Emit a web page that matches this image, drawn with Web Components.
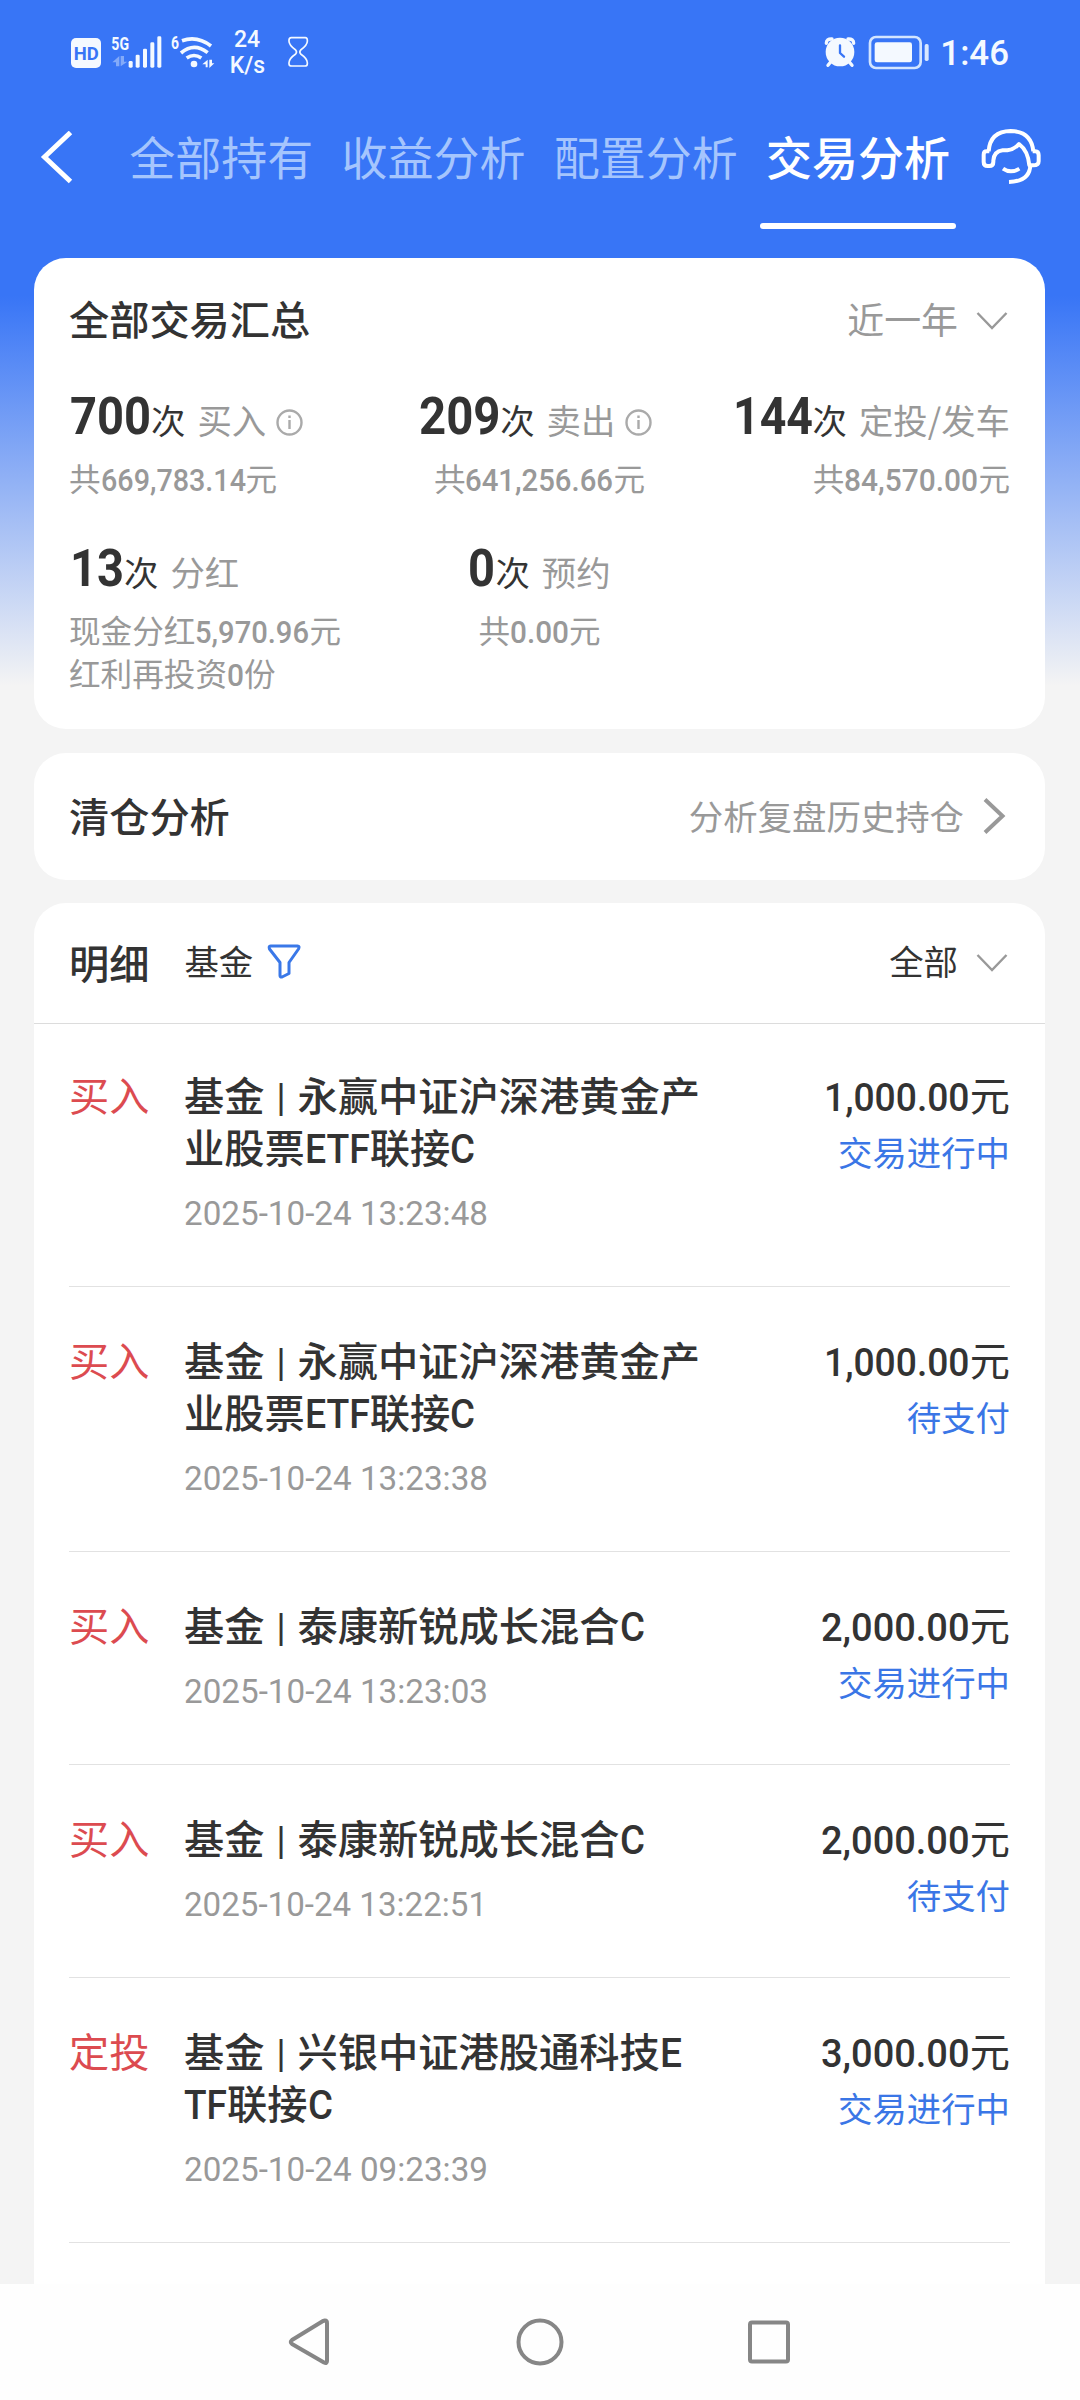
<!DOCTYPE html>
<html lang="zh-CN">
<head>
<meta charset="utf-8">
<title>交易分析</title>
<style>
html,body{margin:0;padding:0}
body{width:1080px;height:2400px;overflow:hidden;font-family:"Noto Sans CJK SC",sans-serif;color:#333}
</style>
</head>
<body>
<app-page>
  <status-bar></status-bar>
  <tab-bar>
    <tab-item>全部持有</tab-item>
    <tab-item>收益分析</tab-item>
    <tab-item>配置分析</tab-item>
    <tab-item active>交易分析</tab-item>
  </tab-bar>
  <page-card style="height:471px">
    <card-head style="--h:120px"><span>全部交易汇总</span><drop-down slot="end" style="font-size:36.9px;color:#999">近一年</drop-down></card-head>
    <stat-grid>
      <stat-item label="买入" info><fit-text slot="n" w="81" style="margin-left:1px">700</fit-text>共<fit-text w="145">669,783.14</fit-text>元</stat-item>
      <stat-item label="卖出" info><fit-text slot="n" w="81.5">209</fit-text>共<fit-text w="148">641,256.66</fit-text>元</stat-item>
      <stat-item label="定投/发车"><fit-text slot="n" w="80">144</fit-text>共<fit-text w="134">84,570.00</fit-text>元</stat-item>
      <stat-item label="分红"><fit-text slot="n" w="54" style="margin-left:1px">13</fit-text>现金分红<fit-text w="114">5,970.96</fit-text>元<br>红利再投资<fit-text w="17">0</fit-text>份</stat-item>
      <stat-item label="预约"><fit-text slot="n" w="27">0</fit-text>共<fit-text w="59">0.00</fit-text>元</stat-item>
    </stat-grid>
  </page-card>
  <page-card style="height:127px;margin-bottom:23px">
    <card-head style="--h:123px"><span>清仓分析</span><more-link slot="end">分析复盘历史持仓</more-link></card-head>
  </page-card>
  <page-card open-end style="height:1381px">
    <card-head line style="--h:117px;padding-bottom:3px"><span>明细</span><filter-tag>基金</filter-tag><drop-down slot="end" style="font-size:34.4px;margin-top:-3px">全部</drop-down></card-head>
    <trade-item first type="买入" time="2025-10-24 13:23:48" tw="304" status="交易进行中"><fit-text slot="amt" w="145.5">1,000.00</fit-text>基金<bar-sep></bar-sep>永赢中证沪深港黄金产<br>业股票<fit-text w="65">ETF</fit-text>联接<fit-text w="25">C</fit-text></trade-item>
    <trade-item type="买入" time="2025-10-24 13:23:38" tw="304" status="待支付"><fit-text slot="amt" w="145.5">1,000.00</fit-text>基金<bar-sep></bar-sep>永赢中证沪深港黄金产<br>业股票<fit-text w="65">ETF</fit-text>联接<fit-text w="25">C</fit-text></trade-item>
    <trade-item type="买入" time="2025-10-24 13:23:03" tw="304" status="交易进行中"><fit-text slot="amt" w="148.5">2,000.00</fit-text>基金<bar-sep></bar-sep>泰康新锐成长混合<fit-text w="25">C</fit-text></trade-item>
    <trade-item type="买入" time="2025-10-24 13:22:51" tw="303" status="待支付"><fit-text slot="amt" w="148.5">2,000.00</fit-text>基金<bar-sep></bar-sep>泰康新锐成长混合<fit-text w="25">C</fit-text></trade-item>
    <trade-item type="定投" time="2025-10-24 09:23:39" tw="304" status="交易进行中"><fit-text slot="amt" w="148.5">3,000.00</fit-text>基金<bar-sep></bar-sep>兴银中证港股通科技<fit-text w="22">E</fit-text><br><fit-text w="43">TF</fit-text>联接<fit-text w="25">C</fit-text></trade-item>
  </page-card>
  <nav-bar slot="nav"></nav-bar>
</app-page>

<script>
function define(name, html, init) {
  const t = document.createElement('template');
  t.innerHTML = html;
  customElements.define(name, class extends HTMLElement {
    constructor() {
      super();
      this.attachShadow({ mode: 'open' }).appendChild(t.content.cloneNode(true));
    }
    connectedCallback() { if (init) init(this, this.shadowRoot); }
  });
}

define('app-page', `<style>
:host{display:flex;flex-direction:column;width:1080px;height:2400px;background:linear-gradient(#3875f6 0,#3875f6 296px,#f4f4f4 686px,#f4f4f4 100%)}
main{height:2284px;overflow:hidden;display:flex;flex-direction:column}
</style><main><slot></slot></main><slot name="nav"></slot>`);

define('status-bar', `<style>
:host{display:flex;justify-content:space-between;height:86px;padding:20px 50px 0 60px;flex:none}
text{font-family:Roboto,sans-serif;fill:#f4f9ff}
</style>
<svg width="260" height="64" viewBox="0 0 780 192" fill="#f4f9ff">
<rect x="33" y="54" width="90" height="90" rx="15"/>
<text x="41" y="119" font-size="57" font-weight="700" textLength="75" lengthAdjust="spacingAndGlyphs" style="fill:#3875f6">HD</text>
<text x="154" y="90" font-size="55" font-weight="700" textLength="53" lengthAdjust="spacingAndGlyphs">5G</text>
<g opacity=".4"><path d="M178 139V108L157 127H168V139Z"/><path d="M182 108V139L202 125H192V108Z"/></g>
<rect x="206" y="123" width="12" height="20" rx="4"/><rect x="227" y="104" width="12" height="39" rx="4"/><rect x="249" y="86" width="12" height="57" rx="4"/><rect x="271" y="67" width="12" height="76" rx="4"/><rect x="292" y="49" width="12" height="94" rx="4"/>
<text x="333" y="87" font-size="54" font-weight="700" textLength="24" lengthAdjust="spacingAndGlyphs">6</text>
<g fill="none" stroke="#f4f9ff" stroke-width="11"><path d="M366 62Q412 46 453 78"/><path d="M363 99Q402 66 443 98"/><path d="M380 114Q402 99 424 114"/></g>
<circle cx="402" cy="132" r="10"/>
<path d="M443 142V119L427 133H437V142Z"/><path d="M448 119V144L463 130H456V119Z"/>
<text x="522" y="81" font-size="69" font-weight="500" textLength="78" lengthAdjust="spacing">24</text>
<text x="509" y="160" font-size="69" font-weight="500" textLength="106" lengthAdjust="spacing">K/s</text>
<path d="M694 53H736Q742 53 742 61V64Q742 76 722 90Q717 96 722 102Q742 116 742 128V131Q742 138 734 138H696Q687 138 687 131V128Q687 116 707 102Q712 96 707 90Q687 76 687 64V61Q687 53 694 53Z" fill="none" stroke="#f4f9ff" stroke-width="5"/>
</svg>
<svg width="220" height="64" viewBox="0 0 660 192" fill="#f4f9ff">
<circle cx="90" cy="96" r="43"/>
<g fill="none" stroke="#f4f9ff" stroke-width="10" stroke-linecap="round"><path d="M49 70Q49 56 66 57" /><path d="M131 70Q131 56 114 57"/><path d="M62 126L54 136M118 126L126 136"/></g>
<path d="M90 76V99L102 110" fill="none" stroke="#3875f6" stroke-width="7" stroke-linecap="round" stroke-linejoin="round"/>
<rect x="180" y="51" width="152" height="93" rx="18" fill="none" stroke="#d3e5ff" stroke-width="8"/>
<rect x="194" y="67" width="112" height="60" rx="7"/>
<rect x="344" y="72" width="12" height="51" rx="5" fill="#d9e8ff"/>
<text x="391" y="136" font-size="105" font-weight="500" textLength="206" lengthAdjust="spacingAndGlyphs">1:46</text>
</svg>`);

define('tab-bar', `<style>
:host{display:flex;height:152px;flex:none;color:#a5c5fd}
.back{margin:25px 0 0 37px;width:92px;flex:none}
nav{display:flex;gap:28px}
.kf{margin:14px 0 0 20px}
</style>
<svg class="back" width="92" height="60" fill="none" stroke="#fff" stroke-width="5"><path d="M33.500 1.500L7.500 26L33.500 50.500"/></svg>
<nav><slot></slot></nav>
<svg class="kf" width="80" height="80" viewBox="0 0 240 240" fill="none" stroke="#fff" stroke-width="12" stroke-linecap="butt" stroke-linejoin="round">
<path d="M56 94Q60 34 122 33Q184 34 190 94"/>
<path d="M58 94H50Q41 94 41 104V126Q41 138 53 138H58Q70 138 70 126V122Q72 94 98 91H112Q134 88 147 72Q174 92 178 136H190Q206 136 206 124V106Q206 94 196 94H188"/>
<path d="M181 134Q180 184 117 186"/>
<path d="M99 146Q122 162 148 146"/>
</svg>`);

define('tab-item', `<style>
:host{display:flex;flex-direction:column;align-items:center;width:184.300px;font-size:46px;line-height:98px;white-space:nowrap}
:host([active]){color:#fff;font-weight:500}
i{display:none;width:196px;height:6px;border-radius:3px;background:#fff;margin-top:19px}
:host([active]) i{display:block}
</style><slot></slot><i></i>`);

define('page-card', `<style>
:host{display:block;box-sizing:border-box;flex:none;width:1011px;margin:0 35px 24px 34px;background:#fff;border-radius:32px}
:host([open-end]){border-radius:32px 32px 0 0;margin-bottom:0}
</style><slot></slot>`);

define('card-head', `<style>
:host{display:flex;align-items:center;justify-content:space-between;height:var(--h);padding:0 35px;font-size:40.200px;font-weight:500;line-height:60px}
:host([line]){border-bottom:1px solid #dcdcdc}
div{display:flex;align-items:center}
</style><div><slot></slot></div><slot name="end"></slot>`);

define('drop-down', `<style>
:host{display:flex;align-items:center;font-weight:400;gap:18px}
svg{margin-top:5px}
</style><slot></slot><svg width="34" height="20" fill="none" stroke="#999" stroke-width="2.400"><path d="M1.500 2L16 17L30.500 2"/></svg>`);

define('more-link', `<style>
:host{display:flex;align-items:center;font-weight:400;font-size:34.400px;color:#999;gap:16px}
svg{margin-top:2px}
</style><slot></slot><svg width="30" height="38" fill="none" stroke="#999" stroke-width="4"><path d="M5 2.500L22.500 19L5 35.500"/></svg>`);

define('filter-tag', `<style>
:host{display:flex;align-items:center;font-weight:400;font-size:34.400px;margin:-3px 0 0 35px;gap:14px}
svg{margin-top:4px}
</style><slot></slot><svg width="36" height="36" fill="none" stroke="#3a78e8" stroke-width="3" stroke-linejoin="round"><path d="M3.500 2H30.500Q33 2 31.500 5L22 18.500V29.500L15 33Q13 33.500 13 31.500V18.500L2.500 5Q1.500 2 3.500 2Z"/></svg>`);

define('stat-grid', `<style>
:host{display:grid;grid-template-columns:repeat(3,1fr);row-gap:0;padding:0 35px;margin-top:-2px}
::slotted(:nth-child(3n+2)){align-items:center}
::slotted(:nth-child(3n)){align-items:flex-end}
</style><slot></slot>`);

define('stat-item', `<style>
:host{display:flex;flex-direction:column;height:152px}
.top{display:flex;align-items:baseline;height:72px;line-height:72px;font-size:34.400px}
.n{font-size:51.500px;font-weight:700}
.l{color:#999;margin-left:12px}
svg{display:none;margin:0 8px 0 10px;align-self:center;position:relative;top:10px}
:host([info]) svg{display:block}
.sub{font-size:31.600px;line-height:43px;color:#999;--w:500;white-space:nowrap;margin-top:8px}
</style>
<div class="top"><span class="n"><slot name="n"></slot></span><span>次</span><span class="l"></span>
<svg width="27" height="27" fill="none" stroke="#aaa" stroke-width="2.400"><circle cx="13.500" cy="13.500" r="12"/><path d="M13.500 11V20M13.500 6.500V9"/></svg></div>
<div class="sub"><slot></slot></div>`, (el, r) => { r.querySelector('.l').textContent = el.getAttribute('label'); });

define('bar-sep', `<style>:host{display:inline-flex;width:33px;justify-content:center;font:400 39px/1 Roboto,sans-serif;vertical-align:baseline}</style><span>|</span>`);

define('trade-item', `<style>
:host{display:flex;box-sizing:border-box;height:auto;margin:0 35px;padding:46.500px 0 39px;border-bottom:1px solid #e2e2e2;line-height:52px}
:host([first]){padding-top:44px}
.type{width:115px;flex:none;font-size:40.200px;color:#dc4b50}
.mid{flex:1;white-space:nowrap}
.name{font-size:40.250px;font-weight:500}
.time{font-size:32.500px;line-height:50px;height:50px;margin-top:13.500px;padding-bottom:11px;color:#999}
.end{display:flex;flex-direction:column;align-items:flex-end}
.amt{font-size:39px;line-height:52px;height:52px;--w:500}
.amt span{font-size:40.200px}
.st{font-size:34.400px;color:#3a76e6;margin-top:5px}
</style>
<div class="type"></div>
<div class="mid"><div class="name"><slot></slot></div><div class="time"></div></div>
<div class="end"><div class="amt"><slot name="amt"></slot><span>元</span></div><div class="st"></div></div>`, (el, r) => {
  r.querySelector('.type').textContent = el.getAttribute('type');
  r.querySelector('.st').textContent = el.getAttribute('status');
  const f = document.createElement('fit-text');
  f.setAttribute('w', el.getAttribute('tw'));
  f.textContent = el.getAttribute('time');
  r.querySelector('.time').replaceChildren(f);
});

define('nav-bar', `<style>
:host{display:flex;align-items:center;justify-content:center;height:116px;background:#fefefe}
</style>
<svg width="560" height="60" fill="none" stroke="#868686" stroke-width="4" stroke-linejoin="round">
<path d="M65 8.500Q67 8.500 67 11V49Q67 52 64 50.500L32 32Q29.500 30 32 28L63 9Z"/>
<circle cx="280" cy="30" r="21.500"/><rect x="490" y="10.500" width="38" height="39" rx="2"/></svg>`);

// Squeezes a Latin or numeric run horizontally so that it occupies exactly the width in "w".
define('fit-text', `<style>
:host{display:inline-block;font-family:Roboto,sans-serif;font-weight:var(--w,inherit);line-height:1;white-space:pre}
span{display:inline-block;transform-origin:0 50%}
</style><span><slot></slot></span>`, (el, r) => {
  const s = r.querySelector('span');
  const w = +el.getAttribute('w');
  const nat = s.getBoundingClientRect().width;
  el.style.width = w + 'px';
  s.style.transform = 'scaleX(' + w / nat + ')';
});
</script>
</body>
</html>
